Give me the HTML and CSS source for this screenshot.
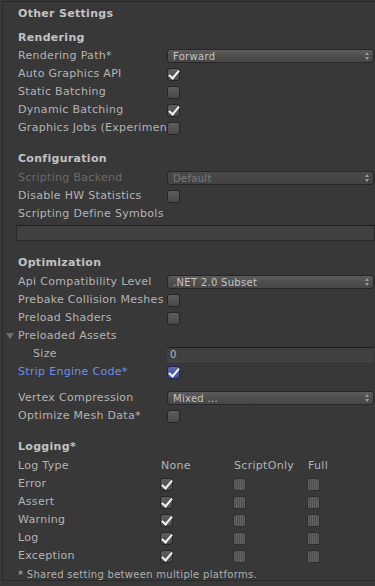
FILE: index.html
```html
<!DOCTYPE html>
<html>
<head lang="en">
    <meta charset="UTF-8">
    <title>Other Settings</title>
    <link rel="stylesheet" href="styles.css">
</head>
<body>
    <div class="panel">
        <div class="title">Other Settings</div>

        <!-- rendering -->
        <div class="heading">Rendering</div>
        <div class="row">
            <span class="label">Rendering Path*</span>
            <div class="popup"><span>Forward</span><i class="arrows"></i></div>
        </div>
        <div class="row">
            <span class="label">Auto Graphics API</span>
            <span class="check on"></span>
        </div>
        <div class="row">
            <span class="label">Static Batching</span>
            <span class="check"></span>
        </div>
        <div class="row">
            <span class="label">Dynamic Batching</span>
            <span class="check on"></span>
        </div>
        <div class="row">
            <span class="label">Graphics Jobs (Experimental)*</span>
            <span class="check"></span>
        </div>

        <!-- configuration -->
        <div class="heading section">Configuration</div>
        <div class="row">
            <span class="label disabled">Scripting Backend</span>
            <div class="popup disabled"><span>Default</span><i class="arrows"></i></div>
        </div>
        <div class="row">
            <span class="label">Disable HW Statistics</span>
            <span class="check"></span>
        </div>
        <div class="row">
            <span class="label">Scripting Define Symbols</span>
        </div>
        <div class="textfield wide"></div>

        <!-- optimization -->
        <div class="heading section">Optimization</div>
        <div class="row">
            <span class="label">Api Compatibility Level</span>
            <div class="popup"><span>.NET 2.0 Subset</span><i class="arrows"></i></div>
        </div>
        <div class="row">
            <span class="label">Prebake Collision Meshes</span>
            <span class="check"></span>
        </div>
        <div class="row">
            <span class="label">Preload Shaders</span>
            <span class="check"></span>
        </div>
        <div class="row">
            <span class="label foldout">Preloaded Assets</span>
        </div>
        <div class="row">
            <span class="label indent">Size</span>
            <div class="textfield">0</div>
        </div>
        <div class="row">
            <span class="label blue">Strip Engine Code*</span>
            <span class="check on blue"></span>
        </div>
        <div class="row gap">
            <span class="label">Vertex Compression</span>
            <div class="popup"><span>Mixed ...</span><i class="arrows"></i></div>
        </div>
        <div class="row">
            <span class="label">Optimize Mesh Data*</span>
            <span class="check"></span>
        </div>

        <!-- logging -->
        <div class="heading section">Logging*</div>
        <div class="logtable">
            <span class="label">Log Type</span>
            <span class="col">None</span>
            <span class="col">ScriptOnly</span>
            <span class="col">Full</span>

            <span class="label">Error</span>
            <span class="cell"><span class="check on"></span></span>
            <span class="cell"><span class="check striped"></span></span>
            <span class="cell"><span class="check striped"></span></span>

            <span class="label">Assert</span>
            <span class="cell"><span class="check on"></span></span>
            <span class="cell"><span class="check striped"></span></span>
            <span class="cell"><span class="check striped"></span></span>

            <span class="label">Warning</span>
            <span class="cell"><span class="check on"></span></span>
            <span class="cell"><span class="check striped"></span></span>
            <span class="cell"><span class="check striped"></span></span>

            <span class="label">Log</span>
            <span class="cell"><span class="check on"></span></span>
            <span class="cell"><span class="check striped"></span></span>
            <span class="cell"><span class="check striped"></span></span>

            <span class="label">Exception</span>
            <span class="cell"><span class="check on"></span></span>
            <span class="cell"><span class="check striped"></span></span>
            <span class="cell"><span class="check striped"></span></span>
        </div>
        <div class="note">* Shared setting between multiple platforms.</div>
    </div>
</body>
</html>
```

FILE: styles.css
```css
html, body {
    margin: 0;
    padding: 0;
    background-color: #383838;
}
body {
    font-family: "DejaVu Sans", "Liberation Sans", sans-serif;
    font-size: 11px;
    letter-spacing: 0.3px;
    color: #b4b4b4;
    overflow: hidden;
    height: 586px;
}
.panel {
    margin: 1px 0 0 2px;
    border-top: 1px solid #2a2a2a;
    border-left: 1px solid #2a2a2a;
    border-bottom: 1px solid #2a2a2a;
    height: 580px;
    padding-left: 15px;
    box-sizing: border-box;
}
.title, .heading {
    font-weight: bold;
    color: #c2c2c2;
    height: 18px;
    line-height: 18px;
}
.title {
    margin-top: 3px;
}
.heading {
    margin-top: 6px;
    margin-bottom: 0;
}
.heading.section {
    margin-top: 13px;
    margin-bottom: 1px;
}
.row {
    display: grid;
    grid-template-columns: 149px 1fr;
    align-items: center;
    height: 18px;
}
.row.gap {
    margin-top: 8px;
}
.label {
    white-space: nowrap;
    overflow: hidden;
    line-height: 18px;
}
.label.disabled {
    color: #6a6a6a;
}
.label.blue {
    color: #6f8fe8;
}
.label.indent {
    padding-left: 15px;
}
.label.foldout {
    position: relative;
    overflow: visible;
}
.label.foldout::before {
    content: "";
    position: absolute;
    left: -12px;
    top: 6px;
    border-left: 4px solid transparent;
    border-right: 4px solid transparent;
    border-top: 6px solid #6e6e6e;
}

/* popups */
.popup {
    display: flex;
    align-items: center;
    justify-content: space-between;
    height: 14px;
    margin-right: 1px;
    padding: 0 3px 0 5px;
    border: 1px solid #262626;
    border-radius: 3px;
    background: linear-gradient(#5c5c5c, #4e4e4e 50%, #474747);
    color: #c4c4c4;
    font-size: 10px;
    box-sizing: border-box;
}
.popup.disabled {
    background: linear-gradient(#4a4a4a, #424242);
    color: #7a7a7a;
}
.arrows {
    width: 5px;
    height: 8px;
    position: relative;
}
.arrows::before, .arrows::after {
    content: "";
    position: absolute;
    left: 0;
    border-left: 2.5px solid transparent;
    border-right: 2.5px solid transparent;
}
.arrows::before {
    top: 0;
    border-bottom: 3px solid #9a9a9a;
}
.arrows::after {
    bottom: 0;
    border-top: 3px solid #9a9a9a;
}

/* text fields */
.textfield {
    height: 15px;
    line-height: 14px;
    margin-right: 1px;
    padding-left: 3px;
    border-top: 1px solid #1f1f1f;
    border-bottom: 1px solid #474747;
    background-color: #404040;
    font-size: 10px;
    color: #b8b8b8;
    box-sizing: border-box;
}
.textfield.wide {
    margin: 2px 0 0 -2px;
    height: 16px;
    border: 1px solid #2a2a2a;
    border-top-color: #1e1e1e;
}

/* checkboxes */
.check {
    display: block;
    width: 13px;
    height: 13px;
    border: 1px solid #252525;
    border-radius: 3px;
    background: linear-gradient(#5e5e5e, #494949);
    box-sizing: border-box;
    position: relative;
}
.check.on::after {
    content: "";
    position: absolute;
    left: 3px;
    top: -1px;
    width: 4px;
    height: 9px;
    border-right: 2px solid #f2f2f2;
    border-bottom: 2px solid #f2f2f2;
    transform: rotate(40deg);
}
.check.blue {
    background: linear-gradient(#5a6ab4, #3f4d92);
    border-color: #1e2550;
}
.check.striped {
    border-color: #2e2e2e;
    border-radius: 3px 3px 2px 2px;
    background: repeating-linear-gradient(90deg, #626262 0 1px, #4e4e4e 1px 2px);
}

/* logging table */
.logtable {
    display: grid;
    grid-template-columns: 142px 73px 74px 1fr;
    grid-auto-rows: 18px;
    align-items: center;
}
.col {
    line-height: 18px;
    padding-left: 1px;
}
.cell {
    display: flex;
    align-items: center;
}
.note {
    margin-top: 1px;
    font-size: 10px;
    color: #b0b0b0;
    line-height: 18px;
    height: 18px;
}
```
